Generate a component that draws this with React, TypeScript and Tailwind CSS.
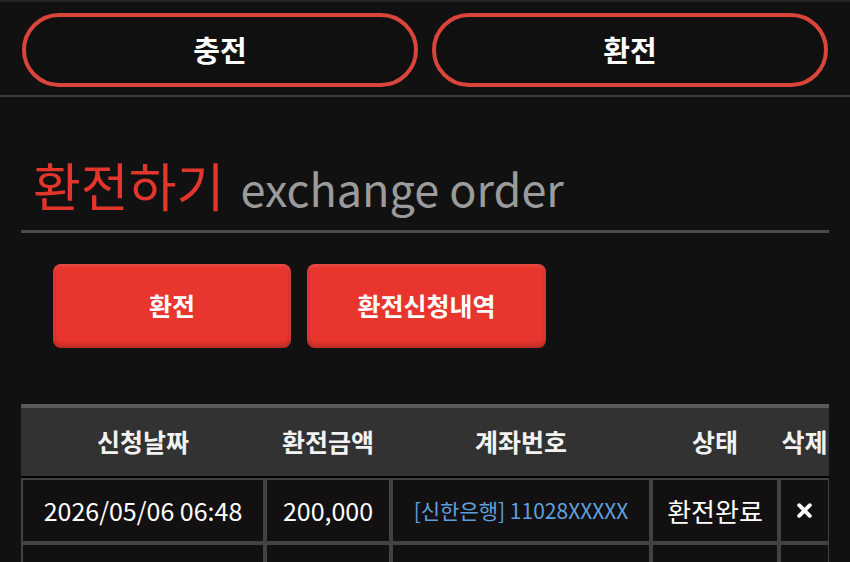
import React from "react";

const rows = [
  { date: "2026/05/06 06:48", amount: "200,000", account: "[신한은행] 11028XXXXX", status: "환전완료" },
  { date: "2026/05/05 21:12", amount: "150,000", account: "[신한은행] 11028XXXXX", status: "환전완료" },
];

function XIcon() {
  return (
    <svg width="17" height="17" viewBox="0 0 16 16" aria-hidden="true">
      <path d="M3 3 L13 13 M13 3 L3 13" stroke="#ffffff" strokeWidth="3.6" strokeLinecap="round" />
    </svg>
  );
}

export default function App() {
  return (
    <div className="h-[562px] overflow-hidden bg-[#121111] font-['Noto_Sans_CJK_KR','Noto_Sans',sans-serif] text-white">
      <div className="h-[2px] bg-[#242424]" />
      <div className="flex gap-[14px] px-[22px] pt-[11px] pb-[8px]">
        <button className="flex h-[74px] flex-1 items-center justify-center rounded-full border-[4px] border-[#d9443b] bg-[#111010] text-[29px] font-bold text-white">
          충전
        </button>
        <button className="flex h-[74px] flex-1 items-center justify-center rounded-full border-[4px] border-[#d9443b] bg-[#111010] text-[29px] font-bold text-white">
          환전
        </button>
      </div>
      <div className="h-[2px] bg-[#3c3c3c]" />

      <div className="px-[21px]">
        <div className="mt-[62px] flex items-baseline border-b-[3px] border-[#4a4a4a] pb-[19px] pl-[12px] leading-none">
          <span className="text-[52px] text-[#e2352c]">환전하기</span>
          <span className="ml-[16px] text-[45px] text-[#9b9b9b]">exchange order</span>
        </div>

        <div className="mt-[31px] flex gap-[16px] pl-[32px]">
          <button className="flex h-[84px] w-[238px] items-center justify-center rounded-[8px] bg-[#e8362f] text-[25px] font-bold text-white shadow-[inset_0_-3px_5px_rgba(0,0,0,0.22),inset_0_2px_3px_rgba(255,255,255,0.12)]">
            환전
          </button>
          <button className="flex h-[84px] w-[239px] items-center justify-center rounded-[8px] bg-[#e8362f] text-[25px] font-bold text-white shadow-[inset_0_-3px_5px_rgba(0,0,0,0.22),inset_0_2px_3px_rgba(255,255,255,0.12)]">
            환전신청내역
          </button>
        </div>

        <div className="mt-[56px] w-[808px]">
          <div className="border-t-[4px] border-[#5a5a5a] bg-[#333232]">
            <div className="grid h-[68px] grid-cols-[240px_122px_256px_124px_47px] items-center gap-x-[4px] px-[2px] text-[25px] font-bold text-[#f2f2f2]">
              <div className="text-center">신청날짜</div>
              <div className="text-center">환전금액</div>
              <div className="text-center">계좌번호</div>
              <div className="text-center">상태</div>
              <div className="flex justify-center whitespace-nowrap">삭제</div>
            </div>
          </div>
          <div className="h-[2px] bg-black" />
          <div className="grid grid-cols-[240px_122px_256px_124px_47px] gap-[4px] bg-[#434242] p-[2px]">
            {rows.map((r, i) => (
              <React.Fragment key={i}>
                <div className="flex h-[61px] items-center justify-center bg-[#121011] text-[25px] text-white">{r.date}</div>
                <div className="flex h-[61px] items-center justify-center bg-[#121011] text-[25px] text-white">{r.amount}</div>
                <div className="flex h-[61px] items-center justify-center bg-[#121011] text-[21px] text-[#5fa0dc]">{r.account}</div>
                <div className="flex h-[61px] items-center justify-center bg-[#121011] text-[26px] text-white">{r.status}</div>
                <div className="flex h-[61px] items-center justify-center bg-[#121011]">
                  <XIcon />
                </div>
              </React.Fragment>
            ))}
          </div>
        </div>
      </div>
    </div>
  );
}
